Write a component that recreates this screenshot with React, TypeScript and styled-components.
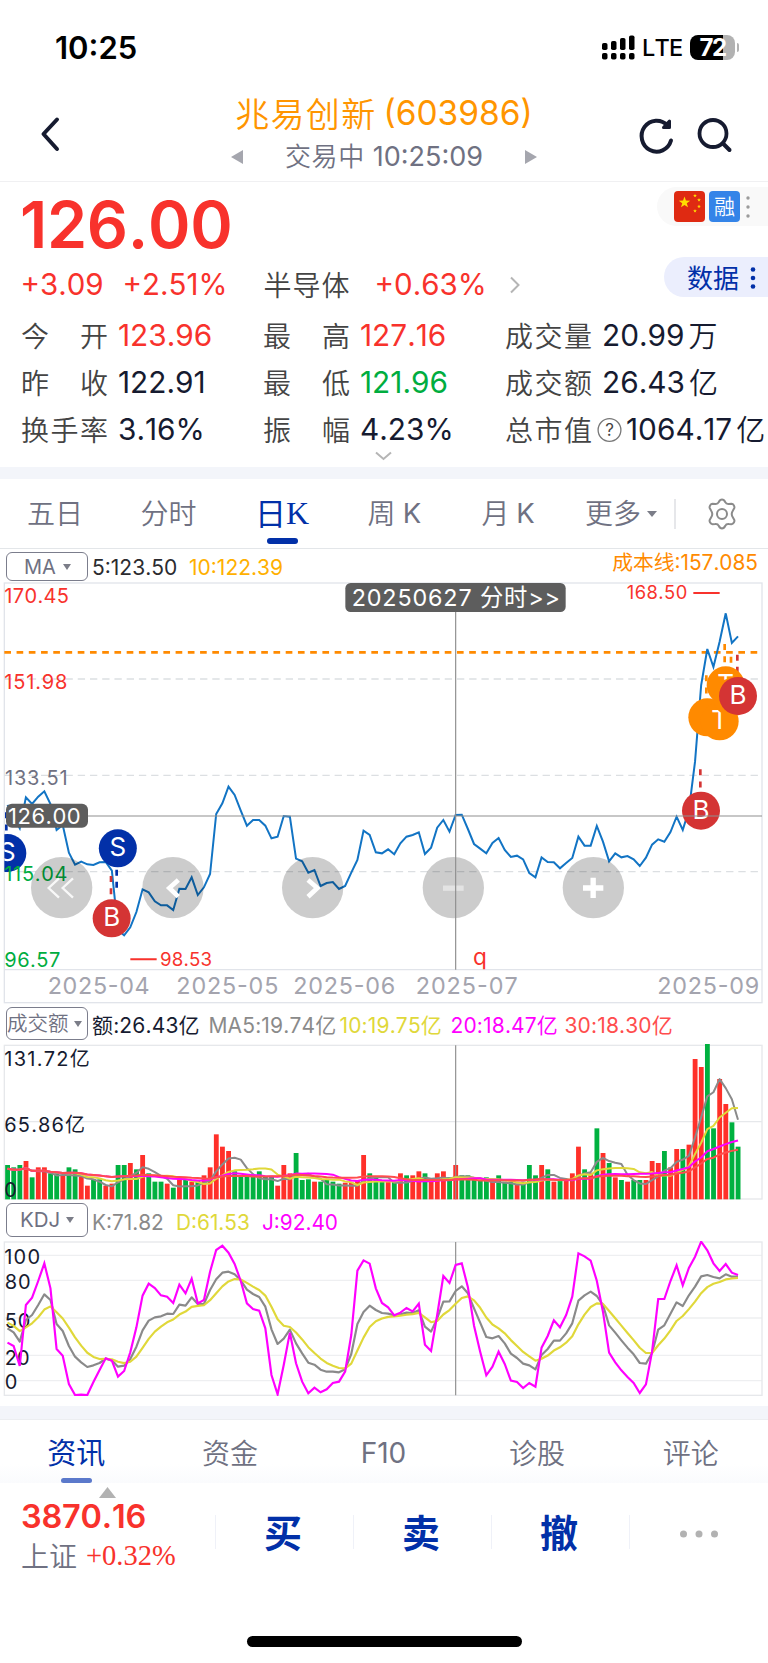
import React from "react";
import styled, { createGlobalStyle } from "styled-components";

const RED = "#f8322c";
const GREEN = "#00ad3f";
const INK = "#161b30";
const SLATE = "#6f7182";
const NAVY = "#0230a8";
const ORANGE = "#ff8a00";
const YELLOW = "#e0d83a";
const MAGENTA = "#ff00ff";
const SANS = `Inter, "Noto Sans CJK SC", sans-serif`;

const Global = createGlobalStyle`
  html, body { margin: 0; padding: 0; background: #fff; }
  body { font-family: ${SANS}; overflow-x: hidden; font-kerning: none; }
  * { box-sizing: border-box; }
`;

const Screen = styled.div`
  width: 768px;
  height: 1663px;
  overflow: hidden;
  background: #fff;
  display: flex;
  flex-direction: column;
  white-space: nowrap;
`;

interface TextProps {
  $size: number;
  $color?: string;
  $weight?: number;
  $track?: number;
  $w?: number;
}
const Text = styled.span<TextProps>`
  font-family: ${SANS};
  font-size: ${(p) => p.$size}px;
  line-height: 1;
  color: ${(p) => p.$color ?? INK};
  font-weight: ${(p) => p.$weight ?? 370};
  letter-spacing: ${(p) => p.$track ?? 0}px;
  ${(p) => (p.$w ? `width: ${p.$w}px; flex: none;` : "")}
`;
const Cjk = styled(Text)`
  font-family: "Noto Sans CJK SC", sans-serif;
  font-weight: ${(p) => p.$weight ?? 350};
  padding-bottom: 3px;
`;
const Serif = styled(Text)`
  font-family: "Liberation Serif", serif;
`;

/* ---------- status bar and header ---------- */
const StatusBar = styled.div`
  height: 95px;
  padding: 0 29px 0 55px;
  display: flex;
  align-items: center;
  justify-content: space-between;
`;
const StatusIcons = styled.div`
  display: flex;
  align-items: center;
  gap: 7.5px;
`;
const Battery = styled.div`
  width: 45px;
  height: 25px;
  border-radius: 8px;
  background: linear-gradient(to right, #000 33px, #b2b2b2 33px);
  display: flex;
  align-items: center;
  justify-content: center;
`;
const BatteryTip = styled.div`
  width: 2.5px;
  height: 9px;
  margin-left: -6px;
  border-radius: 0 3px 3px 0;
  background: #b2b2b2;
`;
const Header = styled.header`
  height: 87px;
  border-bottom: 1.5px solid #f0f0f2;
  display: grid;
  grid-template-columns: 200px 368px 200px;
`;
const HeaderSide = styled.div<{ $right?: boolean }>`
  display: flex;
  align-items: flex-start;
  padding: ${(p) => (p.$right ? "19px 0 0 69px" : "18px 0 0 35px")};
  gap: 18px;
`;
const HeaderTitle = styled.div`
  display: flex;
  flex-direction: column;
  align-items: center;
`;
const TitleLine = styled.div<{ $h: number; $gap: number }>`
  height: ${(p) => p.$h}px;
  display: flex;
  align-items: center;
  gap: ${(p) => p.$gap}px;
`;
const SessionClock = styled.div`
  width: 270px;
  display: flex;
  align-items: center;
  justify-content: center;
  gap: 8px;
`;

/* ---------- quote ---------- */
const Quote = styled.section`
  height: 285px;
  position: relative;
  overflow: hidden;
`;
const PriceRow = styled.div`
  height: 84px;
  padding: 2px 0 0 20px;
  display: flex;
  align-items: center;
`;
const ChangeRow = styled.div`
  height: 38px;
  padding-left: 20.5px;
  display: flex;
  align-items: center;
`;
const Stats = styled.div`
  padding: 8.5px 0 0 21px;
  display: grid;
  grid-template-columns: 242px 242px 1fr;
  grid-auto-rows: 47px;
`;
const Stat = styled.div`
  display: flex;
  align-items: center;
`;
const StatLabel = styled.div`
  width: 87px;
  flex: none;
  display: flex;
  justify-content: space-between;
`;
const StatValue = styled.div<{ $gap: number }>`
  padding-left: ${(p) => p.$gap}px;
  display: flex;
  align-items: center;
  gap: 4px;
`;
const TagPill = styled.div`
  position: absolute;
  right: 0;
  top: 5px;
  width: 111px;
  height: 39px;
  border-radius: 20px 0 0 20px;
  background: #f9f9f9;
  display: flex;
  align-items: center;
  padding-left: 17px;
  gap: 4px;
`;
const Tag = styled.div<{ $bg: string }>`
  width: 31px;
  height: 31px;
  border-radius: 4px;
  background: ${(p) => p.$bg};
  display: flex;
  align-items: center;
  justify-content: center;
`;
const DataPill = styled.div`
  position: absolute;
  right: 0;
  top: 75px;
  width: 104px;
  height: 40px;
  border-radius: 20px 0 0 20px;
  background: #ebeefd;
  display: flex;
  align-items: center;
  padding: 2px 0 0 23px;
  gap: 9.5px;
`;
const Expand = styled.div`
  position: absolute;
  left: 375px;
  top: 269px;
  display: flex;
`;
const Band = styled.div<{ $h: number }>`
  height: ${(p) => p.$h}px;
  flex: none;
  background: #f3f5fa;
`;

/* ---------- tabs ---------- */
const PeriodTabs = styled.nav`
  height: 70px;
  flex: none;
  border-bottom: 1.5px solid #e3e6e9;
  display: grid;
  grid-template-columns: 110px 117px 110px 114px 113px 110px 1fr;
`;
const Tab = styled.div<{ $align?: string; $pad?: number; $lift?: number }>`
  position: relative;
  display: flex;
  align-items: center;
  justify-content: ${(p) => p.$align ?? "center"};
  padding-left: ${(p) => p.$pad ?? 0}px;
  padding-bottom: ${(p) => p.$lift ?? 0}px;
`;
const Underline = styled.i<{ $color: string; $w: number; $h: number; $bottom: number }>`
  position: absolute;
  left: calc(50% - ${(p) => p.$w / 2}px);
  bottom: ${(p) => p.$bottom}px;
  width: ${(p) => p.$w}px;
  height: ${(p) => p.$h}px;
  border-radius: 3px;
  background: ${(p) => p.$color};
`;
const Caret = styled.i<{ $w: number; $h: number }>`
  border-left: ${(p) => p.$w / 2}px solid transparent;
  border-right: ${(p) => p.$w / 2}px solid transparent;
  border-top: ${(p) => p.$h}px solid #7b7d88;
`;
const TabSettings = styled.div`
  display: flex;
  align-items: center;
`;
const Rule = styled.i<{ $h: number; $color: string }>`
  width: 1.5px;
  height: ${(p) => p.$h}px;
  flex: none;
  background: ${(p) => p.$color};
`;

/* ---------- indicator rows ---------- */
const IndicatorRow = styled.div<{ $h: number; $top: number }>`
  height: ${(p) => p.$h}px;
  flex: none;
  padding: ${(p) => p.$top}px 0 0 6px;
  display: flex;
  align-items: flex-start;
`;
const Picker = styled.div<{ $h: number; $pad: number; $gap: number }>`
  width: 82px;
  height: ${(p) => p.$h}px;
  flex: none;
  border: 1.5px solid #7b7d8c;
  border-radius: 6px;
  display: flex;
  align-items: center;
  padding-left: ${(p) => p.$pad}px;
  gap: ${(p) => p.$gap}px;
`;
const Readouts = styled.div<{ $h: number }>`
  height: ${(p) => p.$h}px;
  padding-left: 4px;
  display: flex;
  align-items: center;
  flex: 1;
`;
const CostLine = styled.div`
  margin-left: auto;
  padding: 0 10px 7px 0;
`;
const ChartSvg = styled.svg`
  display: block;
  flex: none;
  font-family: ${SANS};
`;

/* ---------- bottom ---------- */
const InfoTabs = styled.nav`
  height: 64px;
  flex: none;
  border-top: 1.5px solid #eceef1;
  display: grid;
  grid-template-columns: repeat(5, 1fr);
  background: linear-gradient(to bottom, #fff 70%, #fafbfd);
`;
const InfoTab = styled(Tab)`
  padding-top: 3px;
  padding-right: 1px;
`;
const TradeBar = styled.footer`
  height: 153px;
  flex: none;
  display: grid;
  grid-template-columns: 215px repeat(4, 138px);
`;
const IndexCell = styled.div`
  padding: 4px 0 0 21px;
`;
const IndexArrow = styled.div`
  height: 12px;
  padding-left: 78px;
  display: flex;
`;
const IndexLine = styled.div<{ $h: number; $gap?: number }>`
  height: ${(p) => p.$h}px;
  display: flex;
  align-items: center;
  gap: ${(p) => p.$gap ?? 0}px;
`;
const Trade = styled.div`
  height: 34px;
  margin-top: 32px;
  border-left: 1.5px solid #eff1f8;
  display: flex;
  align-items: center;
  justify-content: center;
  padding-right: 3px;
`;
const MoreTrade = styled(Trade)`
  padding: 3px 0 0;
`;
const HomeArea = styled.div`
  flex: 1;
  display: flex;
  justify-content: center;
`;
const HomeBar = styled.div`
  width: 275px;
  height: 10.5px;
  border-radius: 6px;
  background: #000;
`;

/* ---------- data ---------- */
// Charts are drawn in a 3x coordinate space, one sample every STEP units.
const STEP = 18.416;
const X0 = 22.5;
const LEFT = 13;
const RIGHT = 2286;
const CROSS_X = 1367;
const xAt = (i: number) => X0 + i * STEP;
const toPoints = (ys: number[]) => ys.map((y, i) => `${xAt(i).toFixed(1)},${y.toFixed(1)}`).join(" ");

const price = [
  705, 740, 775, 682, 702, 680, 664, 702, 780, 765, 848, 884, 875, 883, 885, 877, 876, 902, 1080, 1096,
  1072, 1026, 958, 967, 994, 1006, 1006, 1020, 956, 957, 922, 975, 952, 912, 732, 700, 650, 675, 722, 767,
  750, 750, 767, 805, 800, 738, 740, 866, 874, 908, 900, 948, 939, 936, 957, 948, 908, 870, 782, 795,
  847, 850, 838, 853, 820, 800, 795, 787, 852, 833, 773, 750, 785, 735, 734, 777, 822, 836, 850, 819,
  804, 840, 861, 857, 868, 909, 922, 862, 876, 877, 895, 879, 864, 800, 827, 827, 768, 815, 874, 850,
  862, 858, 868, 888, 863, 824, 808, 815, 786, 740, 780, 720, 575, 345, 237, 291, 215, 130, 219, 199,
];

const volume =
  "G495 G502 G495 R483 G532 R502 R502 G520 G520 R526 G502 G508 R530 R557 G538 G538 R557 R551 G495 G495 " +
  "R489 G508 R465 G520 G545 G545 R551 G563 R538 G540 R545 G540 R526 R502 R403 R440 R453 G514 G530 G530 " +
  "G530 G514 G530 G530 R557 R495 R520 G459 G540 G538 R545 G545 G540 G545 G551 R548 R548 R540 R465 G520 " +
  "G530 G545 R545 G545 R520 G526 R526 R514 G520 R540 R520 R514 G532 R495 G526 G526 G532 G540 G532 R545 " +
  "G526 G545 G545 R551 G545 G495 G526 R495 G508 R545 G540 R540 R520 R440 G508 R520 G385 R459 G489 R532 " +
  "G540 R545 G540 G540 R540 R483 R489 G453 R502 R447 G447 R434 R177 R201 G132 G385 R237 R312 G367 G440";
const bars = volume.split(" ").map((b) => ({ up: b[0] === "R", top: Number(b.slice(1)) }));
const AVERAGE_DROP = 11;
const movingAverage = (n: number) =>
  bars.map((_, i) => {
    const span = bars.slice(Math.max(0, i - n + 1), i + 1);
    return span.reduce((a, b) => a + b.top, 0) / span.length + AVERAGE_DROP;
  });

const kLine = [
  385, 397, 425, 360, 345, 315, 283, 300, 372, 393, 438, 470, 487, 501, 496, 489, 476, 481, 500, 497,
  477, 440, 391, 362, 352, 349, 341, 342, 314, 317, 292, 312, 312, 270, 238, 218, 215, 223, 241, 269,
  282, 291, 320, 388, 432, 416, 389, 430, 460, 488, 494, 509, 515, 515, 517, 508, 462, 372, 336, 317,
  330, 339, 341, 346, 343, 338, 339, 331, 380, 395, 355, 305, 304, 273, 259, 280, 325, 368, 411, 415,
  408, 430, 461, 474, 491, 496, 508, 465, 447, 422, 422, 400, 370, 302, 286, 275, 288, 315, 376, 398,
  421, 443, 463, 489, 491, 459, 389, 376, 341, 307, 318, 286, 260, 229, 225, 231, 235, 223, 230, 230,
];
const jLine = [
  428, 438, 498, 315, 293, 243, 190, 265, 447, 467, 552, 585, 584, 585, 546, 510, 475, 482, 530, 513,
  457, 382, 287, 251, 264, 286, 290, 309, 254, 280, 236, 310, 300, 215, 150, 137, 158, 192, 243, 310,
  327, 332, 385, 525, 583, 495, 398, 490, 545, 580, 563, 577, 568, 549, 545, 515, 405, 212, 181, 191,
  265, 309, 322, 346, 338, 324, 334, 311, 434, 453, 345, 228, 249, 195, 190, 262, 377, 455, 526, 500,
  455, 492, 542, 546, 564, 549, 560, 443, 408, 361, 382, 345, 290, 160, 169, 182, 242, 335, 458, 487,
  511, 531, 549, 579, 553, 455, 297, 297, 243, 196, 256, 204, 170, 125, 151, 190, 213, 192, 218, 225,
];
const dLine = kLine.reduce<number[]>((acc, k, i) => {
  acc.push(i === 0 ? 368 : (acc[i - 1] * 2 + k) / 3);
  return acc;
}, []);

/* ---------- chart parts ---------- */
interface LabelProps {
  x: number;
  w: number;
  cy: number;
  size: number;
  fill: string;
  children: string;
}
const Label = ({ x, w, cy, size, fill, children }: LabelProps) => (
  <text x={x} y={cy + size * 0.3635} fontSize={size} fill={fill} textLength={w} lengthAdjust="spacing">
    {children}
  </text>
);

const Marker = ({ x, y, letter, fill }: { x: number; y: number; letter?: string; fill: string }) => (
  <g>
    <circle cx={x} cy={y} r={57} fill={fill} />
    {letter && (
      <text x={x} y={y + 24} fontSize={78} fill="#fff" textAnchor="middle">
        {letter}
      </text>
    )}
  </g>
);

const stems: [number, number, string][] = [
  [19, 727, NAVY],
  [350, 899, NAVY],
  [333, 918, "#d43434"],
  [2101, 598, "#d43434"],
  [2119, 316, ORANGE],
  [2174, 222, ORANGE],
  [2193, 260, ORANGE],
  [2212, 254, "#d43434"],
];
const pads = [185, 519, 938, 1360, 1780];

const PriceChart = () => (
  <ChartSvg width={768} height={422} viewBox="0 36 2304 1266">
    <g fill="none" stroke="#e1e4ea" strokeWidth={4}>
      <rect x={LEFT} y={39} width={RIGHT - LEFT} height={1259} />
      <path d={`M${LEFT} 1199H${RIGHT}`} />
    </g>
    <g stroke="#dcdfe2" strokeWidth={4} strokeDasharray="22 14.7">
      {[327, 616, 905].map((y) => (
        <path key={y} d={`M${LEFT} ${y}H${RIGHT}`} />
      ))}
    </g>
    <path d={`M${LEFT} 247H${RIGHT}`} stroke={ORANGE} strokeWidth={8} strokeDasharray="20 16.7" />
    <polyline points={toPoints(price)} fill="none" stroke="#1274c4" strokeWidth={6} />
    {stems.map(([x, y, c]) => (
      <path key={x} d={`M${x} ${y}v55`} stroke={c} strokeWidth={8} strokeDasharray="18 18.5" />
    ))}
    <clipPath id="plot">
      <rect x={LEFT} y={39} width={RIGHT - LEFT} height={1160} />
    </clipPath>
    <g clipPath="url(#plot)">
      <Marker x={22} y={849} letter="S" fill={NAVY} />
      <Marker x={353.5} y={835} letter="S" fill={NAVY} />
      <Marker x={335} y={1045} letter="B" fill="#d43434" />
      <Marker x={2103} y={722} letter="B" fill="#d43434" />
      <Marker x={2122} y={442} fill={ORANGE} />
      <Marker x={2159} y={454} letter="T" fill={ORANGE} />
      <Marker x={2177} y={346} letter="T" fill={ORANGE} />
      <Marker x={2196} y={382} fill={ORANGE} />
      <Marker x={2214} y={378} letter="B" fill="#d43434" />
    </g>
    <Label x={13} w={194} cy={78} size={60} fill={RED}>170.45</Label>
    <Label x={13} w={189} cy={335} size={60} fill={RED}>151.98</Label>
    <Label x={15} w={188} cy={624} size={60} fill={SLATE}>133.51</Label>
    <Label x={13} w={189} cy={912} size={60} fill={GREEN}>115.04</Label>
    <Label x={13} w={168} cy={1169} size={60} fill={GREEN}>96.57</Label>
    <path d="M391 1168H470M2080 69H2159" stroke={RED} strokeWidth={6} />
    <Label x={480} w={156} cy={1167} size={56} fill={RED}>98.53</Label>
    <Label x={1880} w={182} cy={67} size={55} fill={RED}>168.50</Label>
    <text x={1419} y={1186} fontSize={68} fill={RED}>q</text>
    {pads.map((x) => (
      <circle key={x} cx={x} cy={953} r={92} fill="rgba(0,0,0,0.2)" />
    ))}
    <g fill="none" stroke="#fff">
      <path d="M177 925L146 954L177 983M219 925L188 954L219 983" strokeWidth={7} strokeOpacity={0.85} />
      <path d="M535 930L508 954L535 980M924 930L952 954L924 980" strokeWidth={14} />
      <path d="M1329 954.5H1391" strokeWidth={16} strokeOpacity={0.45} />
      <path d="M1749 954H1810M1779.500 923V984" strokeWidth={16} />
    </g>
    <g stroke="#8f8f8f" strokeWidth={3.500}>
      <path d={`M${CROSS_X} 100V1199M200 738H${RIGHT}`} />
    </g>
    <rect x={18} y={701} width={246} height={72} rx={18} fill="#5d5d5d" />
    <Label x={24} w={218} cy={738} size={66} fill="#fff">126.00</Label>
    <rect x={1036} y={39} width={661} height={87} rx={16} fill="#5d5d5d" />
    <Label x={1055} w={625} cy={84} size={70} fill="#fff">20250627 分时&gt;&gt;</Label>
    {(
      [
        ["2025-04", 143],
        ["2025-05", 529],
        ["2025-06", 880],
        ["2025-07", 1247],
        ["2025-09", 1972],
      ] as [string, number][]
    ).map(([t, x]) => (
      <Label key={t} x={x} w={306} cy={1246} size={70} fill="#a4a4ae">
        {t}
      </Label>
    ))}
  </ChartSvg>
);

const VolumeChart = () => (
  <ChartSvg width={768} height={156} viewBox="0 132 2304 468">
    <g fill="none" stroke="#e6e8eb" strokeWidth={4}>
      <rect x={LEFT} y={136} width={RIGHT - LEFT} height={461} />
      <path d={`M${LEFT} 365H${RIGHT}`} />
    </g>
    {bars.map((b, i) => (
      <rect key={i} x={xAt(i) - 7} y={b.top} width={14.500} height={598 - b.top} fill={b.up ? "#ff3029" : "#00b140"} />
    ))}
    <path d={`M${CROSS_X} 136V598`} stroke="#8f8f8f" strokeWidth={3.500} />
    <g fill="none" strokeWidth={6} strokeLinejoin="round">
      <polyline points={toPoints(movingAverage(5))} stroke="#8a8a8a" />
      <polyline points={toPoints(movingAverage(10))} stroke={YELLOW} />
      <polyline points={toPoints(movingAverage(20))} stroke={MAGENTA} />
      <polyline points={toPoints(movingAverage(30))} stroke="#ff4d4d" />
    </g>
    <Label x={13} w={256} cy={177} size={60} fill={INK}>131.72亿</Label>
    <Label x={13} w={242} cy={373} size={60} fill={INK}>65.86亿</Label>
    <Label x={13} w={36} cy={570} size={60} fill={INK}>0</Label>
  </ChartSvg>
);

const KdjChart = () => (
  <ChartSvg width={768} height={155} viewBox="0 123 2304 465">
    <g fill="none" stroke="#eeeff1" strokeWidth={4}>
      {[166, 241, 354, 466, 542].map((y) => (
        <path key={y} d={`M${LEFT} ${y}H${RIGHT}`} />
      ))}
      <rect x={LEFT} y={126} width={RIGHT - LEFT} height={460} stroke="#e6e8eb" />
    </g>
    <Label x={13} w={107} cy={170} size={60} fill={INK}>100</Label>
    <Label x={14} w={78} cy={246} size={60} fill={INK}>80</Label>
    <Label x={14} w={77} cy={362} size={60} fill={INK}>50</Label>
    <Label x={14} w={75} cy={474} size={60} fill={INK}>20</Label>
    <Label x={14} w={37} cy={546} size={60} fill={INK}>0</Label>
    <path d={`M${CROSS_X} 126V586`} stroke="#8f8f8f" strokeWidth={3.500} />
    <g fill="none" strokeWidth={6.500} strokeLinejoin="round">
      <polyline points={toPoints(kLine)} stroke="#8a8a8a" />
      <polyline points={toPoints(dLine)} stroke={YELLOW} />
      <polyline points={toPoints(jLine)} stroke={MAGENTA} strokeLinejoin="miter" />
    </g>
  </ChartSvg>
);

/* ---------- icons ---------- */
const Signal = () => (
  <svg width={33} height={25} viewBox="0 0 33 25">
    {[7, 9, 12, 14.500].map((h, i) => (
      <g key={i}>
        <rect x={i * 9} y={15 - h} width={5.500} height={h} rx={1.800} />
        <rect x={i * 9} y={18} width={5.500} height={6.500} rx={1.800} />
      </g>
    ))}
  </svg>
);
const Back = () => (
  <svg width={28} height={42} viewBox="0 0 28 42">
    <path d="M22 6.500L8.500 21L22 36" fill="none" stroke={INK} strokeWidth={4} strokeLinecap="round" strokeLinejoin="round" />
  </svg>
);
const Refresh = () => (
  <svg width={38} height={42} viewBox="0 0 38 42">
    <path d="M34 26.500A15 15.500 0 1 1 30.500 11.500" fill="none" stroke={INK} strokeWidth={4} strokeLinecap="round" />
    <path d="M32.500 7V13.500H26.500Z" fill={INK} stroke={INK} strokeWidth={3} strokeLinecap="round" strokeLinejoin="round" />
  </svg>
);
const Search = () => (
  <svg width={42} height={42} viewBox="0 0 42 42">
    <circle cx={20} cy={19.500} r={13.500} fill="none" stroke={INK} strokeWidth={3.800} />
    <path d="M30 29.500L36.500 36" stroke={INK} strokeWidth={4} strokeLinecap="round" />
  </svg>
);
const Triangle = ({ dir }: { dir: "left" | "right" | "up" }) => {
  const d = { left: "M12 1V15L0 8Z", right: "M0 1V15L12 8Z", up: "M0 11L8.500 0L17 11Z" }[dir];
  const w = dir === "up" ? 17 : 12;
  return (
    <svg width={w} height={16} viewBox={`0 0 ${w} 16`}>
      <path d={d} fill={dir === "up" ? "#b2b2b2" : "#a5a6ae"} />
    </svg>
  );
};
const Dots = ({ fill, r, gap }: { fill: string; r: number; gap: number }) => (
  <svg width={8} height={28} viewBox="0 0 8 28">
    {[-1, 0, 1].map((k) => (
      <circle key={k} cx={4} cy={14 + k * gap} r={r} fill={fill} />
    ))}
  </svg>
);
const starPath = (cx: number, cy: number, r: number) =>
  "M" +
  Array.from({ length: 10 }, (_, i) => {
    const a = -Math.PI / 2 + (i * Math.PI) / 5;
    const rr = i % 2 ? r * 0.4 : r;
    return `${(cx + rr * Math.cos(a)).toFixed(2)} ${(cy + rr * Math.sin(a)).toFixed(2)}`;
  }).join("L") +
  "Z";
const Flag = () => (
  <svg width={31} height={31} viewBox="0 0 31 31">
    <g fill="#ffde00">
      <path d={starPath(10.500, 11.500, 6)} />
      <path d={starPath(21, 4.700, 2)} />
      <path d={starPath(25, 9, 2)} />
      <path d={starPath(25, 15.500, 2)} />
      <path d={starPath(21, 20, 2)} />
    </g>
  </svg>
);
const Gear = () => (
  <svg width={34} height={34} viewBox="0 0 34 34" fill="none" stroke="#8b8b8b" strokeWidth={2}>
    <path
      d="M17 2.500C18.500 2.500 19.500 3.500 20.300 5.200C21 6.800 22 7.200 23.800 7L26.500 6.800C28.500 6.800 30 9.600 29.200 11.300L27.800 13.700C26.300 16 26.300 18 27.800 20.300L29.200 22.700C30 24.400 28.500 27.200 26.500 27.200L23.800 27C22 26.800 21 27.200 20.300 28.800C19.500 30.500 18.500 31.500 17 31.500C15.500 31.500 14.500 30.500 13.700 28.800C13 27.200 12 26.800 10.200 27L7.500 27.200C5.500 27.200 4 24.400 4.800 22.700L6.200 20.300C7.700 18 7.700 16 6.200 13.700L4.800 11.300C4 9.600 5.500 6.800 7.500 6.800L10.200 7C12 7.200 13 6.800 13.700 5.200C14.500 3.500 15.500 2.500 17 2.500Z"
      strokeLinejoin="round"
    />
    <circle cx={17} cy={17} r={5} />
  </svg>
);
const Help = () => (
  <svg width={25} height={26} viewBox="0 0 25 26">
    <circle cx={12.500} cy={13} r={11.400} fill="none" stroke="#777" strokeWidth={1.300} />
    <text x={12.500} y={19} fontSize={17} fontFamily="Inter" fill="#444" textAnchor="middle">?</text>
  </svg>
);

/* ---------- page ---------- */
interface StatItem {
  label: string;
  value: string;
  unit?: string;
  color?: string;
  help?: boolean;
}
const stats: StatItem[] = [
  { label: "今开", value: "123.96", color: RED },
  { label: "最高", value: "127.16", color: RED },
  { label: "成交量", value: "20.99", unit: "万" },
  { label: "昨收", value: "122.91" },
  { label: "最低", value: "121.96", color: GREEN },
  { label: "成交额", value: "26.43", unit: "亿" },
  { label: "换手率", value: "3.16%" },
  { label: "振幅", value: "4.23%" },
  { label: "总市值", value: "1064.17", unit: "亿", help: true },
];

const volumeReadouts: [string, string, number][] = [
  ["额:26.43亿", INK, 116.500],
  ["MA5:19.74亿", "#8a8a8a", 131],
  ["10:19.75亿", YELLOW, 111],
  ["20:18.47亿", MAGENTA, 114],
  ["30:18.30亿", "#ff4d4d", 110],
];

export default function App() {
  return (
    <>
      <Global />
      <Screen>
        <StatusBar>
          <Text $size={31} $weight={600} $color="#000">10:25</Text>
          <StatusIcons>
            <Signal />
            <Text $size={23.500} $weight={450} $color="#000" $track={-0.800}>LTE</Text>
            <Battery>
              <Text $size={24} $weight={650} $color="#fff" $track={-1.500}>72</Text>
            </Battery>
            <BatteryTip />
          </StatusIcons>
        </StatusBar>
        <Header>
          <HeaderSide>
            <Back />
          </HeaderSide>
          <HeaderTitle>
            <TitleLine $h={38} $gap={7}>
              <Cjk $size={34} $color="#ff9500" $track={1.300}>兆易创新</Cjk>
              <Text $size={33.500} $color="#ff9500" $track={0}>(603986)</Text>
            </TitleLine>
            <TitleLine $h={47} $gap={6}>
              <Triangle dir="left" />
              <SessionClock>
                <Cjk $size={26} $color={SLATE} $track={0.600}>交易中</Cjk>
                <Text $size={27} $color={SLATE}>10:25:09</Text>
              </SessionClock>
              <Triangle dir="right" />
            </TitleLine>
          </HeaderTitle>
          <HeaderSide $right>
            <Refresh />
            <Search />
          </HeaderSide>
        </Header>

        <Quote>
          <PriceRow>
            <Text $size={64.500} $weight={600} $color={RED} $track={-0.300}>126.00</Text>
          </PriceRow>
          <ChangeRow>
            <Text $size={29.500} $color={RED} $w={102}>+3.09</Text>
            <Text $size={29.500} $color={RED} $w={141}>+2.51%</Text>
            <Cjk $size={28} $color="#444" $track={1} $w={111}>半导体</Cjk>
            <Text $size={29.500} $color={RED} $w={135}>+0.63%</Text>
            <svg width={10} height={18} viewBox="0 0 10 18">
              <path d="M1 1.500L8.500 9L1 16.500" fill="none" stroke="#b5b5b5" strokeWidth={2} />
            </svg>
          </ChangeRow>
          <Stats>
            {stats.map((s) => (
              <Stat key={s.label}>
                <StatLabel>
                  {s.label.split("").map((c) => (
                    <Cjk key={c} $size={28} $color="#444">{c}</Cjk>
                  ))}
                </StatLabel>
                <StatValue $gap={s.help ? 5 : 10}>
                  {s.help && <Help />}
                  <Text $size={29.800} $color={s.color}>{s.value}</Text>
                  {s.unit && <Cjk $size={29}>{s.unit}</Cjk>}
                </StatValue>
              </Stat>
            ))}
          </Stats>
          <TagPill>
            <Tag $bg="#df2a12">
              <Flag />
            </Tag>
            <Tag $bg="#3484e8">
              <Cjk $size={21} $color="#fff">融</Cjk>
            </Tag>
            <Dots fill="#9b9b9b" r={1.700} gap={9} />
          </TagPill>
          <DataPill>
            <Cjk $size={26} $color={NAVY} $weight={400}>数据</Cjk>
            <Dots fill={NAVY} r={2.300} gap={8.500} />
          </DataPill>
          <Expand>
            <svg width={17} height={10} viewBox="0 0 17 10">
              <path d="M1 1.500L8.500 8L16 1.500" fill="none" stroke="#b5b5b5" strokeWidth={2} />
            </svg>
          </Expand>
        </Quote>

        <Band $h={12} />

        <PeriodTabs>
          <Tab><Cjk $size={28} $color={SLATE}>五日</Cjk></Tab>
          <Tab><Cjk $size={28} $color={SLATE}>分时</Cjk></Tab>
          <Tab $lift={2}>
            <Cjk $size={31} $color={NAVY} $weight={400}>日</Cjk>
            <Serif $size={32} $color={NAVY} $weight={400}>K</Serif>
            <Underline $color={NAVY} $w={31} $h={6} $bottom={4} />
          </Tab>
          <Tab>
            <Cjk $size={28} $color={SLATE}>周</Cjk>
            <Text $size={27.500} $color={SLATE} $track={-0.500}>&nbsp;K</Text>
          </Tab>
          <Tab>
            <Cjk $size={28} $color={SLATE}>月</Cjk>
            <Text $size={27.500} $color={SLATE} $track={-1}>&nbsp;K</Text>
          </Tab>
          <Tab $align="flex-start" $pad={21}>
            <Cjk $size={28} $color={SLATE} $w={62}>更多</Cjk>
            <Caret $w={10} $h={6} />
          </Tab>
          <TabSettings>
            <Rule $h={30} $color="#e6e7ea" />
            <Tab $pad={29}>
              <Gear />
            </Tab>
          </TabSettings>
        </PeriodTabs>

        <IndicatorRow $h={33} $top={3}>
          <Picker $h={29} $pad={17} $gap={7}>
            <Text $size={20} $color={SLATE}>MA</Text>
            <Caret $w={8} $h={6} />
          </Picker>
          <Readouts $h={30}>
            <Text $size={21} $color="#2b2b2f" $w={97}>5:123.50</Text>
            <Text $size={21} $color="#ffb000">10:122.39</Text>
            <CostLine>
              <Text $size={20.800} $color={ORANGE}>成本线:157.085</Text>
            </CostLine>
          </Readouts>
        </IndicatorRow>
        <PriceChart />

        <IndicatorRow $h={40} $top={3}>
          <Picker $h={33} $pad={0} $gap={5}>
            <Cjk $size={20.500} $color={SLATE}>成交额</Cjk>
            <Caret $w={8} $h={6} />
          </Picker>
          <Readouts $h={37}>
            {volumeReadouts.map(([t, c, w]) => (
              <Text key={t} $size={21} $color={c} $w={w} $track={0.150}>{t}</Text>
            ))}
          </Readouts>
        </IndicatorRow>
        <VolumeChart />

        <IndicatorRow $h={41} $top={3}>
          <Picker $h={34} $pad={13} $gap={6}>
            <Text $size={20.500} $color={SLATE}>KDJ</Text>
            <Caret $w={8} $h={6} />
          </Picker>
          <Readouts $h={40}>
            <Text $size={20.800} $color="#8a8a8a" $w={84}>K:71.82</Text>
            <Text $size={20.800} $color={YELLOW} $w={86}>D:61.53</Text>
            <Text $size={20.800} $color={MAGENTA}>J:92.40</Text>
          </Readouts>
        </IndicatorRow>
        <KdjChart />
        <Rule $h={10} $color="#fff" />
        <Band $h={13} />

        <InfoTabs>
          <InfoTab>
            <Cjk $size={29} $color={NAVY} $weight={400}>资讯</Cjk>
            <Underline $color="#5b79cb" $w={31} $h={5} $bottom={0} />
          </InfoTab>
          <InfoTab><Cjk $size={28} $color={SLATE}>资金</Cjk></InfoTab>
          <InfoTab><Text $size={28} $color={SLATE}>F10</Text></InfoTab>
          <InfoTab><Cjk $size={28} $color={SLATE}>诊股</Cjk></InfoTab>
          <InfoTab><Cjk $size={28} $color={SLATE}>评论</Cjk></InfoTab>
        </InfoTabs>
        <TradeBar>
          <IndexCell>
            <IndexArrow>
              <Triangle dir="up" />
            </IndexArrow>
            <IndexLine $h={37}>
              <Text $size={32.500} $weight={600} $color={RED} $track={-0.200}>3870.16</Text>
            </IndexLine>
            <IndexLine $h={40} $gap={9}>
              <Cjk $size={28} $color={SLATE}>上证</Cjk>
              <Serif $size={28.500} $color={RED}>+0.32%</Serif>
            </IndexLine>
          </IndexCell>
          <Trade><Cjk $size={38} $weight={700} $color={NAVY}>买</Cjk></Trade>
          <Trade><Cjk $size={38} $weight={700} $color={NAVY}>卖</Cjk></Trade>
          <Trade><Cjk $size={38} $weight={700} $color={NAVY}>撤</Cjk></Trade>
          <MoreTrade>
            <svg width={40} height={8} viewBox="0 0 40 8">
              {[4.500, 20, 35.500].map((x) => (
                <circle key={x} cx={x} cy={4} r={3.500} fill="#b2b2b2" />
              ))}
            </svg>
          </MoreTrade>
        </TradeBar>
        <HomeArea>
          <HomeBar />
        </HomeArea>
      </Screen>
    </>
  );
}
